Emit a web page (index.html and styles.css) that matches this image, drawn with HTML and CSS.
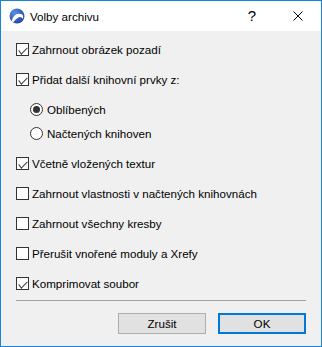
FILE: index.html
```html
<!DOCTYPE html>
<html lang="cs">
<head>
    <meta charset="UTF-8">
    <meta name="viewport" content="width=device-width, initial-scale=1.0">
    <title>Volby archivu</title>
    <link rel="stylesheet" href="styles.css">
</head>
<body>
    <div class="dialog">
        <div class="titlebar">
            <svg class="app-icon" width="16" height="16" viewBox="0 0 16 16">
                <defs>
                    <radialGradient id="ball" cx="0.35" cy="0.3" r="0.8">
                        <stop offset="0" stop-color="#5b8fe6"/>
                        <stop offset="1" stop-color="#1c3f9a"/>
                    </radialGradient>
                </defs>
                <circle cx="8" cy="8" r="7.5" fill="url(#ball)"/>
                <path d="M2.5 13.5 Q5 3.5 13.5 6.5 Q14.6 9 14 11 Q11 6 4.5 14 Z" fill="#fff"/>
            </svg>
            <span class="title">Volby archivu</span>
            <span class="caption-btn help">?</span>
            <span class="caption-btn">
                <svg width="10" height="10" viewBox="0 0 10 10">
                    <path d="M0.5 0.5 L9.5 9.5 M9.5 0.5 L0.5 9.5" stroke="#000" stroke-width="1"/>
                </svg>
            </span>
        </div>

        <div class="content">
            <div class="options">
                <label class="option">
                    <span class="check checked"></span>
                    Zahrnout obrázek pozadí
                </label>
                <label class="option">
                    <span class="check checked"></span>
                    Přidat další knihovní prvky z:
                </label>
                <div class="radio-group">
                    <label class="option">
                        <span class="radio selected"></span>
                        Oblíbených
                    </label>
                    <label class="option">
                        <span class="radio"></span>
                        Načtených knihoven
                    </label>
                </div>
                <label class="option">
                    <span class="check checked"></span>
                    Včetně vložených textur
                </label>
                <label class="option">
                    <span class="check"></span>
                    Zahrnout vlastnosti v načtených knihovnách
                </label>
                <label class="option">
                    <span class="check"></span>
                    Zahrnout všechny kresby
                </label>
                <label class="option">
                    <span class="check"></span>
                    Přerušit vnořené moduly a Xrefy
                </label>
                <label class="option">
                    <span class="check checked"></span>
                    Komprimovat soubor
                </label>
            </div>

            <div class="separator"></div>

            <div class="buttons">
                <button class="btn">Zrušit</button>
                <button class="btn default">OK</button>
            </div>
        </div>
    </div>
</body>
</html>
```

FILE: styles.css
```css
* {
    margin: 0;
    padding: 0;
    box-sizing: border-box;
    font-family: 'Liberation Sans', Arial, sans-serif;
}

body {
    width: 322px;
    height: 347px;
    overflow: hidden;
    background: #fff;
}

.dialog {
    width: 322px;
    height: 347px;
    border: 1px solid #1883d7;
    display: flex;
    flex-direction: column;
    background: #f0f0f0;
}

/* Title bar */
.titlebar {
    height: 30px;
    background: #fff;
    display: flex;
    align-items: center;
}

.app-icon {
    margin-left: 8px;
    flex-shrink: 0;
}

.title {
    margin-left: 5px;
    font-size: 11.6px;
    color: #000;
    flex: 1;
}

.caption-btn {
    width: 46px;
    height: 30px;
    display: flex;
    justify-content: center;
    align-items: center;
}

.help {
    font-size: 15px;
    color: #000;
    padding-bottom: 1px;
}

/* Content */
.content {
    flex: 1;
    padding: 12px 15px 0;
    display: flex;
    flex-direction: column;
}

.options {
    display: flex;
    flex-direction: column;
    gap: 17px;
}

.radio-group {
    display: flex;
    flex-direction: column;
    gap: 11px;
    padding-left: 14px;
}

.option {
    height: 13px;
    display: flex;
    align-items: center;
    font-size: 11.6px;
    color: #000;
    white-space: nowrap;
}

.check {
    width: 13px;
    height: 13px;
    border: 1px solid #333;
    background: #fff;
    margin-right: 3px;
    flex-shrink: 0;
    position: relative;
}

.check.checked::after {
    content: '';
    position: absolute;
    left: 1px;
    top: 0px;
    width: 8px;
    height: 4px;
    border-left: 1px solid #333;
    border-bottom: 1px solid #333;
    transform: translate(0.5px, 3px) rotate(-45deg) skewX(-8deg);
    transform-origin: 50% 50%;
}

.radio {
    width: 13px;
    height: 13px;
    border: 1px solid #333;
    border-radius: 50%;
    background: #fff;
    margin-right: 4px;
    flex-shrink: 0;
    display: flex;
    justify-content: center;
    align-items: center;
}

.radio.selected::after {
    content: '';
    width: 7px;
    height: 7px;
    border-radius: 50%;
    background: #333;
}

.separator {
    margin-top: 10px;
    height: 1px;
    background: #a0a0a0;
}

.buttons {
    margin-top: 12px;
    display: flex;
    justify-content: flex-end;
    gap: 12px;
}

.btn {
    width: 88px;
    height: 21px;
    background: #e1e1e1;
    border: 1px solid #adadad;
    font-size: 11.6px;
    color: #000;
}

.btn.default {
    border: 2px solid #0078d7;
}
```
